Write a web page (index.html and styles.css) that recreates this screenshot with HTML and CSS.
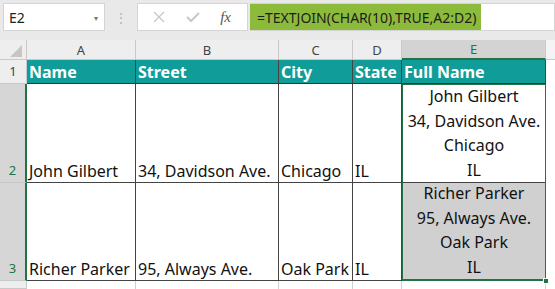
FILE: index.html
```html
<!DOCTYPE html>
<html lang="en">
<head>
    <meta charset="UTF-8">
    <title>TEXTJOIN sheet</title>
    <link rel="stylesheet" href="styles.css">
</head>
<body>
    <div class="toolbar">
        <div class="name-box">
            <span>E2</span>
            <span class="caret">&#9662;</span>
        </div>
        <div class="grip">&#8942;</div>
        <div class="fx-box">
            <svg width="14" height="14" viewBox="0 0 14 14"><path d="M2 2 L12 12 M12 2 L2 12" stroke="#c8c8c8" stroke-width="1.4" fill="none"/></svg>
            <svg width="16" height="14" viewBox="0 0 16 14"><path d="M2 7 L6 11 L14 3" stroke="#c8c8c8" stroke-width="2" fill="none"/></svg>
            <span class="fx">fx</span>
        </div>
        <div class="formula">=TEXTJOIN(CHAR(10),TRUE,A2:D2)</div>
    </div>

    <div class="sheet">
        <div class="corner"><svg width="26" height="20" viewBox="0 0 26 20"><path d="M22 5 L22 17 L10 17 Z" fill="#c6c6c6"/></svg></div>
        <div class="col-head">A</div>
        <div class="col-head">B</div>
        <div class="col-head">C</div>
        <div class="col-head">D</div>
        <div class="col-head active">E</div>
        <div class="col-head blank"></div>

        <div class="row-head">1</div>
        <div class="cell title">Name</div>
        <div class="cell title">Street</div>
        <div class="cell title">City</div>
        <div class="cell title">State</div>
        <div class="cell title">Full Name</div>
        <div class="cell blank"></div>

        <div class="row-head active">2</div>
        <div class="cell">John Gilbert</div>
        <div class="cell">34, Davidson Ave.</div>
        <div class="cell">Chicago</div>
        <div class="cell">IL</div>
        <div class="cell joined current">John Gilbert<br>34, Davidson Ave.<br>Chicago<br>IL</div>
        <div class="cell blank"></div>

        <div class="row-head active">3</div>
        <div class="cell">Richer Parker</div>
        <div class="cell">95, Always Ave.</div>
        <div class="cell">Oak Park</div>
        <div class="cell">IL</div>
        <div class="cell joined picked">Richer Parker<br>95, Always Ave.<br>Oak Park<br>IL<span class="handle"></span></div>
        <div class="cell blank"></div>

        <div class="row-head"></div>
        <div class="cell empty"></div>
        <div class="cell empty"></div>
        <div class="cell empty"></div>
        <div class="cell empty"></div>
        <div class="cell empty"></div>
        <div class="cell blank"></div>
    </div>
</body>
</html>
```

FILE: styles.css
```css
* {
    box-sizing: border-box;
}
body {
    margin: 0;
    width: 555px;
    height: 289px;
    overflow: hidden;
    font-family: "Noto Sans", Arial, sans-serif;
    background-color: #ffffff;
}
.toolbar {
    display: flex;
    align-items: stretch;
    height: 40px;
    padding: 3px 0 9px 3px;
    background-color: #e9e9e9;
}
.name-box {
    width: 102px;
    display: flex;
    align-items: center;
    justify-content: space-between;
    padding: 0 6px 0 5px;
    background-color: #ffffff;
    border: 1px solid #d4d4d4;
    font-size: 14px;
    color: #222;
}
.caret {
    font-size: 8px;
    color: #777;
}
.grip {
    width: 32px;
    display: flex;
    align-items: center;
    justify-content: center;
    color: #b5b5b5;
    font-size: 14px;
}
.fx-box {
    width: 111px;
    display: flex;
    align-items: center;
    justify-content: space-between;
    padding: 0 16px 0 14px;
    background-color: #ffffff;
    border: 1px solid #d4d4d4;
}
.fx {
    font-family: "Liberation Serif", serif;
    font-style: italic;
    font-size: 15px;
    color: #555;
}
.formula {
    width: 231px;
    margin-left: 2px;
    display: flex;
    align-items: center;
    padding-left: 7px;
    background-color: #8cbb3c;
    font-size: 14px;
    color: #1d1d1d;
    border-top: 1px solid #d4d4d4;
    border-bottom: 1px solid #d4d4d4;
}
.toolbar::after {
    content: "";
    flex: 1;
    background-color: #ffffff;
    border: 1px solid #d4d4d4;
    border-left: none;
}
.sheet {
    display: grid;
    grid-template-columns: 27px 109px 143px 74px 49px 144px 9px;
    grid-template-rows: 20px 24px 99px 98px 8px;
}
.corner, .col-head, .row-head {
    background-color: #eeeeee;
    color: #444;
    font-size: 13px;
    display: flex;
    align-items: center;
    justify-content: center;
    border-right: 1px solid #c9c9c9;
    border-bottom: 1px solid #c9c9c9;
}
.corner {
    align-items: stretch;
}
.col-head.active {
    background-color: #d3d3d3;
    color: #217346;
    border-bottom: 2px solid #217346;
}
.col-head.blank {
    background-color: #f4f4f4;
    border-right: none;
}
.row-head {
    align-items: flex-end;
    padding-bottom: 3px;
}
.row-head.active {
    background-color: #d6d6d6;
    color: #217346;
    border-right: 2px solid #217346;
}
.cell {
    font-size: 16px;
    color: #111;
    display: flex;
    align-items: flex-end;
    padding: 0 0 0 2px;
    white-space: nowrap;
    border-right: 1px solid #444;
    border-bottom: 1px solid #444;
}
.cell.title {
    background-color: #109c98;
    color: #ffffff;
    font-weight: bold;
    align-items: center;
    border-bottom-color: #333;
}
.cell.blank {
    border: none;
}
.cell.empty {
    border-bottom: none;
    border-right-color: #d0d0d0;
}
.joined {
    position: relative;
    justify-content: center;
    text-align: center;
    line-height: 24.5px;
    padding: 0;
}
.current {
    border: 1px solid #217346;
    border-bottom: 1px solid #444;
}
.picked {
    background-color: #d0d0d0;
    border: 1px solid #217346;
    border-top: none;
    border-bottom-width: 2px;
}
.handle {
    position: absolute;
    right: -4px;
    bottom: -5px;
    width: 6px;
    height: 6px;
    background-color: #217346;
    border: 1px solid #ffffff;
}
```
